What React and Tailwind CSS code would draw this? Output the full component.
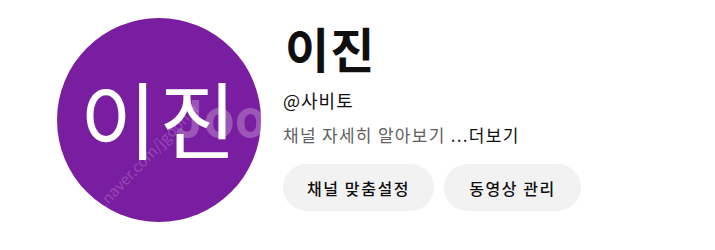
import React from 'react';

const font = { fontFamily: '"Noto Sans CJK KR", "Noto Sans", sans-serif' };

export default function App() {
  return (
    <div className="w-[715px] h-[250px] bg-white flex items-start pl-[57px] gap-[22px]" style={font}>
      {/* avatar */}
      <div className="relative mt-[18px] w-[204px] h-[204px] rounded-full bg-[#7a1ea1] overflow-hidden flex items-center justify-center shrink-0">
        <span className="absolute left-[118px] top-[72px] text-white/25 text-[50px] font-bold leading-none">Joo</span>
        <span className="absolute left-[22px] top-[200px] origin-left -rotate-[46deg] text-white/20 text-[15px] leading-none whitespace-nowrap">
          blog.naver.com/jgoonai
        </span>
        <span className="relative text-white text-[84px] leading-none font-normal tracking-[2px] -mt-[6px]">이진</span>
      </div>

      {/* info */}
      <div className="flex flex-col mt-[23px]">
        <h1 className="text-[48px] font-bold leading-none text-[#0f0f0f] tracking-[1px] ml-[2px]">이진</h1>
        <div className="mt-[20px] text-[18px] leading-none text-[#0f0f0f] tracking-[1px]">@사비토</div>
        <div className="mt-[17px] text-[17px] leading-none text-[#606060] tracking-[1.3px]">
          채널 자세히 알아보기 <span className="text-[#0f0f0f]">...더보기</span>
        </div>
        <div className="flex gap-[10px] mt-[21px]">
          <button className="h-[47px] px-[24px] rounded-full bg-[#f2f2f2] text-[16px] font-medium text-[#0f0f0f] tracking-[1.6px]">
            채널 맞춤설정
          </button>
          <button className="h-[47px] px-[25px] rounded-full bg-[#f2f2f2] text-[16px] font-medium text-[#0f0f0f] tracking-[1.6px]">
            동영상 관리
          </button>
        </div>
      </div>
    </div>
  );
}
